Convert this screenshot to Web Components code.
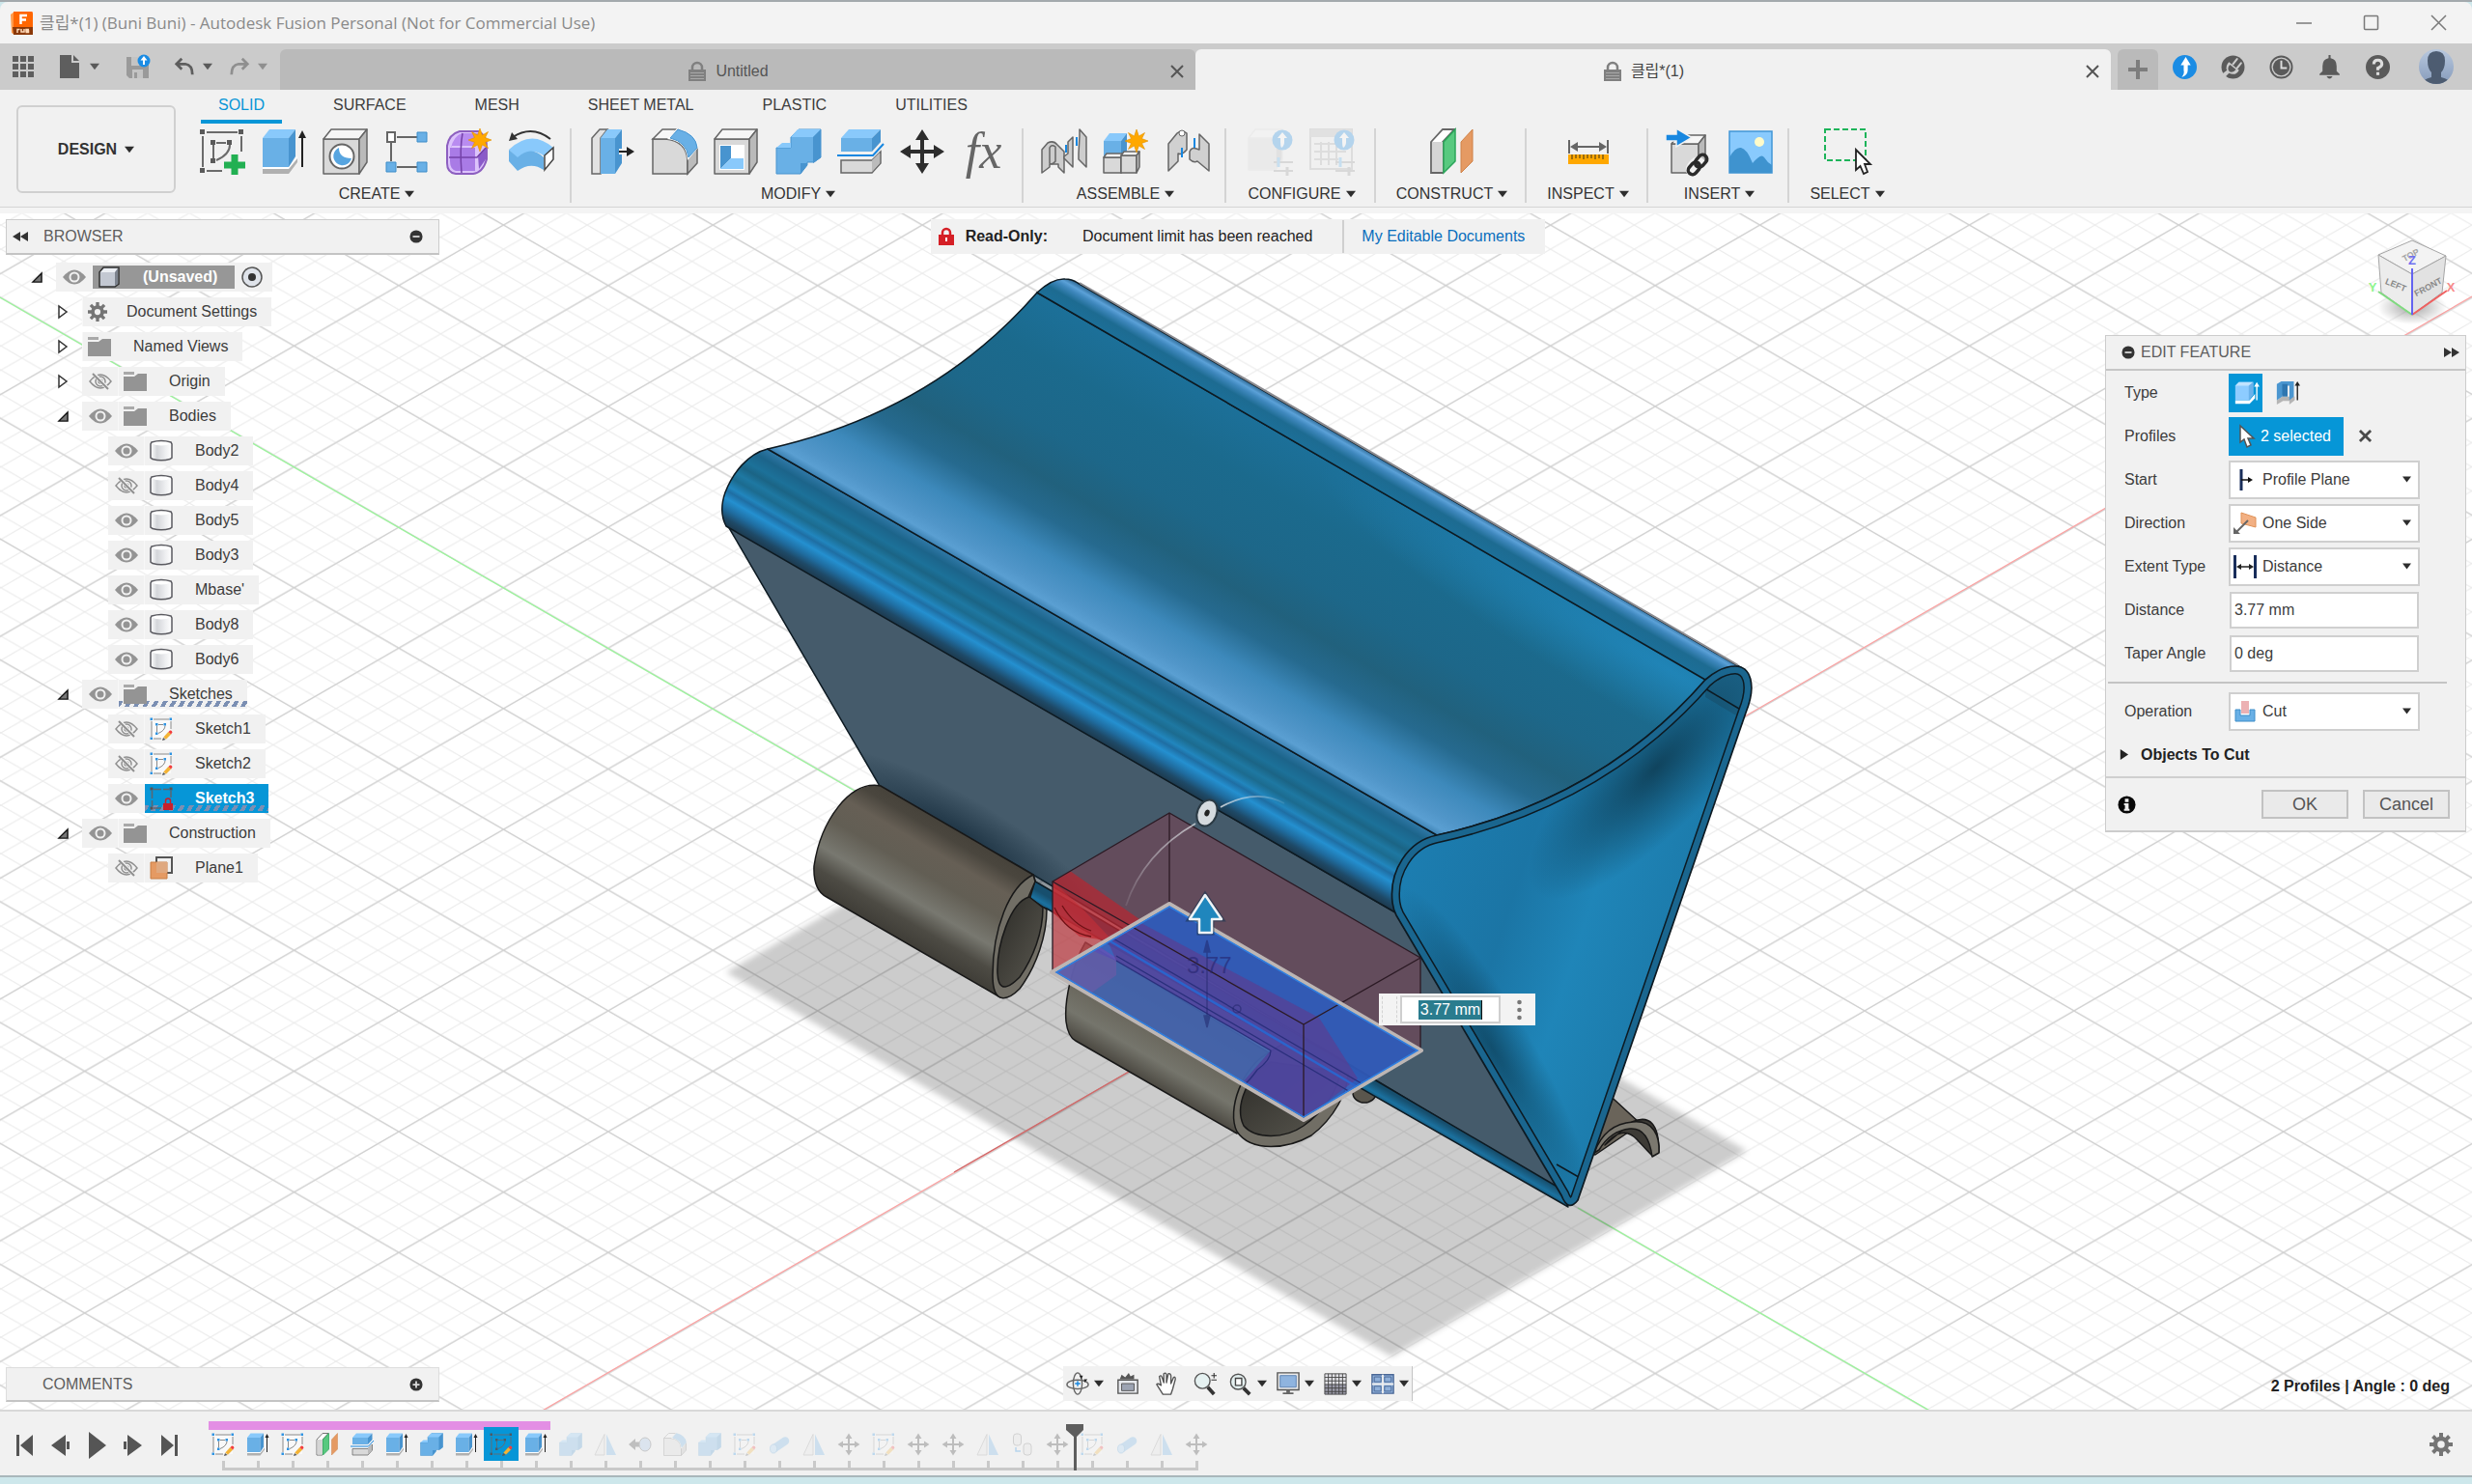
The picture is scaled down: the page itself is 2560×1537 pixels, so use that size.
<!DOCTYPE html>
<html lang="en">
<head>
<meta charset="utf-8">
<title>클립*(1) - Autodesk Fusion Personal</title>
<style>
  html, body { height: 100%; }
  body {
    margin: 0; display: flex; flex-direction: column; overflow: hidden;
    font: 16px/20px "Liberation Sans", "Noto Sans CJK KR", sans-serif;
    color: #3c3c3c; background: #cde7eb;
    border-top: 2px solid #a3a9ad; box-sizing: border-box;
  }
  model-viewport { flex: 1; min-height: 0; }
</style>
</head>
<body>
<title-bar></title-bar>
<document-bar></document-bar>
<tool-ribbon></tool-ribbon>
<model-viewport>
  <notice-bar slot="top"></notice-bar>
  <browser-panel slot="top-left"></browser-panel>
  <view-cube slot="top-right"></view-cube>
  <edit-panel slot="right"></edit-panel>
  <comments-panel slot="bottom-left"></comments-panel>
  <navigation-bar slot="bottom"></navigation-bar>
  <span slot="status">2 Profiles | Angle : 0 deg</span>
</model-viewport>
<time-line></time-line>

<script>
/* Icon artwork: name -> [viewBox size, markup] */
const B = { t: '#89c9fb', f: '#69b0e6', s: '#4894cf' };
const box = (x, y, w, h, d, c, stroke) => {
  const e = Math.round(d * 0.8);
  const st = stroke ? ` stroke="${stroke}" stroke-width="1.5" stroke-linejoin="round"` : '';
  return `<path fill="${c.f}"${st} d="M${x} ${y + d}h${w}v${h}h${-w}z"/><path fill="${c.t}"${st} d="M${x} ${y + d}l${e} ${-d}h${w}l${-e} ${d}z"/><path fill="${c.s}"${st} d="M${x + w} ${y + d}l${e} ${-d}v${h - 2}l${-e} ${d + 2}z"/>`;
};
const G = { t: '#f6f6f6', f: '#d9d9d9', s: '#bababa' };
const GS = '#666';
const star = (x, y) => `<path fill="#ffa800" stroke="#e09000" stroke-width=".6" transform="translate(${x} ${y})" d="M0-12 2.4-5 8.5-8.500 5.500-2.400 12 0 5.500 2.400 8.500 8.500 2.400 5 0 12-2.400 5-8.500 8.500-5.500 2.400-12 0-5.500-2.400-8.500-8.500-2.400-5z"/>`;
const sq = (x, y, s, c) => `<path fill="${c}" d="M${x} ${y}h${s}v${s}h${-s}z"/>`;
const upBadge = (x, y) => `<circle cx="${x}" cy="${y}" r="10.500" fill="#1b8ce4"/><path fill="#fff" d="M${x} ${y - 8}l5 6h-3v4q0 4-3 6-1-2-1-6v-4h-3z"/>`;
const sliders = (x, y) => `<g stroke="#999" stroke-width="2" fill="none"><path d="M${x} ${y}h20M${x} ${y + 9}h20"/><path stroke="#5fb4ee" stroke-width="3" d="M${x + 5} ${y - 5}v10"/><path stroke-width="3" d="M${x + 14} ${y + 5}v9"/></g>`;
const pencil = `<path fill="#f5b333" stroke="#d79a22" stroke-width=".5" d="M29 41 39 30 44 35 34 45z"/><path fill="#555" d="M28 42 33 46 26 48z"/><path fill="#f23c3c" d="M39 30 42 27Q46 26 47 31L44 35z"/>`;
const sketchBase = (c, l) => `<g stroke="${l}" stroke-width="2" fill="none"><path d="M8 4H40M4 8V40M44 8V24M8 44H24M15 17V31M18 15H28M32 17Q32 27 18 33"/></g>` + [[1,1],[41,1],[1,41],[12,12],[29,12],[12,31]].map(p => sq(p[0], p[1], 5, c)).join('');
const ICONS = {
  sketch: [48, sketchBase('#5a5a5a', '#6b6b6b') + '<path stroke="#f1f1f1" stroke-width="12" d="M38 25v24M25 38h24"/><path stroke="#22b052" stroke-width="7" d="M37 27v21M26 38h22"/>'],
  sketchEdit: [48, '<path fill="#fff" opacity=".6" d="M4 4h40v40H4z"/>' + sketchBase('#2d93e2', '#8a8a8a') + pencil],
  sketchActive: [48, sketchBase('#4c5a64', '#5d6f7a') + pencil],
  sketchLocked: [48, `<g stroke="#5d6670" stroke-width="3" fill="none"><path d="M8 5H40M5 8V40M44 8V22" stroke-dasharray="16 4"/><path d="M8 44h16"/></g>${sq(1,1,6,'#5c5050')}${sq(41,1,6,'#5c5050')}${sq(1,41,6,'#5c5050')}<path fill="none" stroke="#c7202c" stroke-width="3" d="M33 34v-5a5 5 0 0 1 10 0v5"/><path fill="#c7202c" d="M28 34h20v14H28z"/>`],
  extrude: [48, '<path fill="#b0b0b0" d="M2 41h27l9-12v6L29 47H2z"/><path fill="#fff" d="M2 40h27l9-12v3l-9 11H2z"/>' + box(2, 1, 27, 30, 9, B) + '<path stroke="#222" stroke-width="2" d="M43 8v32"/><path fill="#222" d="M39 10 43 2l4 8z"/>'],
  hole: [48, box(1, 1, 37, 36, 10, G, GS) + '<circle cx="20" cy="29" r="12.500" fill="#fff" stroke="#666" stroke-width="2"/><path fill="#57a5e0" d="M17 20a9.500 9.500 0 1 0 13 11Q17 31 17 20z"/>'],
  pattern: [48, '<g stroke="#666" stroke-width="2" fill="none"><path d="M13 9H34M7 15V34M13 40H34"/><path fill="#fff" d="M3 4h8v10H3z"/></g>' + [[34,4],[2,35],[34,35]].map(p => `<path fill="#69b0e6" stroke="#3f8dc8" d="M${p[0]} ${p[1]}h10v10h-10z"/>`).join('')],
  form: [48, '<path fill="#dcc3fb" stroke="#8d5fc0" stroke-width="2" d="M1 18Q3 6 14 3H34Q43 8 42 22V32Q38 46 28 47H10Q1 46 1 36z"/><path fill="#b98cf0" d="M5 20Q8 8 16 5H34L28 18H5z"/><path fill="#a97be6" d="M4 20H30V44H10Q4 42 4 34z"/><path fill="#8a5bc9" d="M33 28 41 20V32L34 42z"/><path fill="none" stroke="#7442a8" stroke-width="1.5" d="M3 30H32L41 20M17 5Q14 20 16 46"/>' + star(35, 12)],
  bend: [48, '<path fill="#89c9fb" d="M1 22Q24 0 47 20L38 29Q24 18 10 31z"/><path fill="#69b0e6" d="M1 22 10 30Q24 17 37 30V43Q24 34 10 44L1 34z"/><path fill="#fff" stroke="#444" stroke-width="1.500" d="M38 28 47 20V32L38 43z"/><path fill="none" stroke="#333" stroke-width="2" d="M5 9Q25-4 44 11"/><path fill="#333" d="M1 13 4 4 10 11z"/>'],
  press: [48, '<path fill="#e2e2e2" stroke="#666" stroke-width="1.500" d="M2 47V10L10 1H18L11 10V47z"/>' + box(11, 1, 15, 37, 9, B) + '<path stroke="#f1f1f1" stroke-width="6" d="M30 24h9"/><path stroke="#222" stroke-width="2" d="M30 24h10"/><path fill="#222" d="M38 19l8 5-8 5z"/>'],
  fillet: [48, '<path fill="#d9d9d9" stroke="#666" stroke-width="1.500" d="M1 47V11H14Q36 13 37 33V47z"/><path fill="#f6f6f6" stroke="#666" stroke-width="1.500" d="M1 11 11 1H26L18 11z"/><path fill="#bbb" stroke="#666" stroke-width="1.500" d="M37 47V31L47 20V36z"/><path fill="#fff" d="M16 11 26 0Q48 6 48 20L37 33Q36 13 16 11z"/><path fill="#69b0e6" stroke="#4894cf" d="M19 10 27 1Q46 6 47 20L38 30Q36 14 19 10z"/>'],
  shell: [48, box(1, 1, 36, 36, 10, G, GS) + '<path fill="#fff" d="M6 17h26v26H6z"/><path fill="#4894cf" d="M7 18h11v13L7 42z"/><path fill="#89c9fb" d="M7 42 18 31H31V42z"/>'],
  combine: [48, '<path fill="#69b0e6" stroke="#4894cf" d="M1 47V20H16V9L24 1H47V30L40 35H33V38L26 47z"/><path fill="#89c9fb" d="M1 20 7 15H16V20zM16 9 23 1H47L39 9z"/><path fill="#4894cf" d="M39 9 47 1V30L39 36zM26 36H33V38L26 47z"/>'],
  split: [48, '<path fill="#69b0e6" d="M4 10H36V24H4z"/><path fill="#89c9fb" d="M4 10 12 1H45L36 10z"/><path fill="#4894cf" d="M36 10 45 1V14L36 24z"/><path fill="none" stroke="#1787e0" stroke-width="2" d="M0 28H37L48 16"/><path fill="#d9d9d9" stroke="#666" stroke-width="1.500" d="M4 33H36L45 24V36L36 46H4z"/><path fill="#bbb" d="M36 33 44 25V36L36 45z"/>'],
  move: [48, '<path stroke="#2d2d2d" stroke-width="4" d="M24 6V42M6 24H42"/><path fill="#2d2d2d" d="M17 12 24 1l7 11zM17 36 24 47l7-11zM12 17 1 24l11 7zM36 17 47 24l-11 7z"/>'],
  joint: [48, '<g fill="#cdcdcd" stroke="#666" stroke-width="1.500" stroke-linejoin="round"><path d="M1 46V22L7 15Q13 12 17 17L24 24V46L18 40V37H9V40z"/><path d="M9 36V20Q11 16 15 19V34Q12 38 9 36z"/><path d="M28 14 33 9V40L24 31V29L28 26z"/><path d="M40 8V1L47 9V40L39 32V26z"/></g><path stroke="#1787e0" stroke-width="2" d="M26 17v8M37 9v9"/>'],
  component: [48, box(1, 5, 18, 20, 8, B) + box(1, 26, 18, 16, 4, G, GS) + box(19, 24, 16, 18, 4, G, GS) + star(35, 13)],
  asBuilt: [48, '<g fill="#d0d0d0" stroke="#666" stroke-width="1.500" stroke-linejoin="round"><path d="M4 44V16L13 5Q18 1 23 5V22Q18 28 14 26V34z"/><path d="M46 44V16L36 6V22Q28 18 26 24V32Q30 36 34 34z"/></g><path stroke="#1787e0" stroke-width="2" d="M18 20v10M31 10v10"/><circle cx="18" cy="5" r="3" fill="#fff" stroke="#666"/>'],
  config: [48, `<g opacity=".28">${box(1, 1, 28, 33, 9, G, '#ddd')}${upBadge(36, 12)}${sliders(27, 35)}</g>`],
  configTable: [48, `<g opacity=".28"><path fill="#eee" stroke="#aaa" stroke-width="2" d="M1 1H44V42H1z"/><path fill="#bbb" d="M1 1H44V9H1z"/><path stroke="#aaa" stroke-width="2" fill="none" d="M5 16H38M5 24H38M5 32H30M12 14V38M20 14V38M28 14V38"/>${upBadge(36, 12)}${sliders(27, 35)}</g>`],
  construct: [48, '<path fill="#fff" stroke="#666" stroke-width="1.800" d="M2 46V14L14 1H26L14 14V46z"/><path fill="#d5d5d5" d="M3 14H14V45H3z"/><path fill="#58c97f" stroke="#2ba55a" stroke-width="1.500" d="M15 46V14L27 1V34z"/><path fill="#e59a63" stroke="#cf8248" d="M33 46V14L45 1V34z"/>'],
  measure: [48, '<path stroke="#666" stroke-width="2" fill="none" d="M4 12V26M44 12V26M8 19H40"/><path fill="#666" d="M5 19 13 14V24zM43 19 35 14V24z"/><path fill="#ffa800" d="M3 27H45V37H3z"/><path stroke="#7d5a10" stroke-width="1.500" d="M7 27v5M11 27v4M15 27v4M19 27v5M23 27v4M27 27v4M31 27v5M35 27v4M39 27v5"/>'],
  insertLink: [48, box(6, 7, 28, 30, 9, G, GS) + '<path fill="#1787e0" stroke="#f1f1f1" stroke-width="1.500" d="M0 6H11V0L27 9.500 11 19V13H0z"/><g fill="none" stroke="#f1f1f1" stroke-width="9"><rect x="24" y="36" width="14" height="9" rx="4.500" transform="rotate(-50 31 40)"/></g><g fill="none" stroke="#2b2b2b" stroke-width="3.500"><rect x="22" y="37" width="14" height="9" rx="4.500" transform="rotate(-50 29 41)"/><rect x="30" y="29" width="14" height="9" rx="4.500" transform="rotate(-50 37 34)"/></g>'],
  image: [48, '<path fill="#89cafd" stroke="#4296d6" stroke-width="1.500" d="M2 3H46V46H2z"/><circle cx="33" cy="14" r="5" fill="#fffbc9"/><path fill="#3f93cf" d="M2 46V30Q8 19 14 20T26 36Q35 25 38 30T46 38V46z"/>'],
  select: [48, '<path fill="none" stroke="#1db45a" stroke-width="2" stroke-dasharray="6 3" d="M1 1H43V33H1z"/><path fill="#fff" stroke="#222" stroke-width="1.800" d="M33 22V43L37.500 39 41 47 45 45 42 37H48z"/>'],
  caret: [12, '<path fill="#2d2d2d" d="M0 2H12L6 10z"/>'],
  caretDim: [12, '<path fill="#8f8f8f" d="M0 2H12L6 10z"/>'],
  caretTab: [12, '<path fill="#5a5a5a" d="M0 2H12L6 10z"/>'],
  right: [12, '<path fill="#222" d="M2 0V12L11 6z"/>'],
  rewind: [16, '<path fill="#333" d="M8 3V13L0 8zM16 3V13L8 8z"/>'],
  forward: [16, '<path fill="#333" d="M0 3V13L8 8zM8 3V13L16 8z"/>'],
  minus: [16, '<circle cx="8" cy="8" r="7.500" fill="#333"/><path stroke="#ddd" stroke-width="2" d="M4 8H12"/>'],
  plus: [16, '<circle cx="8" cy="8" r="7.500" fill="#333"/><path stroke="#ddd" stroke-width="2" d="M4 8H12M8 4V12"/>'],
  info: [20, '<circle cx="10" cy="10" r="9.500" fill="#080808"/><path fill="#eee" d="M8 3.500h4v3.500H8zM7 8.500h5v6h1v2H7v-2h1v-4H7z"/>'],
  xmark: [14, '<path stroke="#4a4a4a" stroke-width="3" d="M1 1 13 13M13 1 1 13"/>'],
  xthin: [14, '<path stroke="#555" stroke-width="2" d="M1 1 13 13M13 1 1 13"/>'],
  lock: [20, '<path fill="none" stroke="#808080" stroke-width="2.500" d="M5 10V6a5 5 0 0 1 10 0v4"/><path fill="#808080" d="M1 8H19V20H1z"/><path stroke="#a8a8a8" stroke-width="1.200" d="M3 11.500H17M3 14.500H17M3 17.500H17"/>'],
  redLock: [20, '<path fill="none" stroke="#d51f26" stroke-width="2.500" d="M6 9V6a4 4 0 0 1 8 0v3"/><path fill="#d51f26" d="M2 8H18V19H2z"/><path fill="#fff" d="M9 11h2v4H9z"/>'],
  apps: [24, [0, 8, 16].map(y => [0, 8, 16].map(x => sq(x + 1, y + 1, 6, '#5e5e5e')).join('')).join('')],
  file: [26, '<path fill="#5e5e5e" d="M3 1H15V9H23V25H3z"/><path fill="#5e5e5e" d="M17 1V7H23z"/>'],
  save: [26, '<path fill="#9a9a9a" d="M1 3H20L24 7V25H4L1 22z"/><path fill="#c4c4c4" d="M6 3H17V12H6zM7 16H18V25H7z"/><path fill="#9a9a9a" d="M9 19h3v6H9z"/><circle cx="19" cy="7" r="6.500" fill="#1b8ce4"/><path fill="#fff" d="M19 2l3.500 4.500h-2.500V11h-2V6.500h-2.500z"/>'],
  undo: [24, '<path fill="none" stroke="#5e5e5e" stroke-width="3" d="M9 3 3 9 9 15M3 9H13Q21 10 21 21"/>'],
  redo: [24, '<path fill="none" stroke="#8f8f8f" stroke-width="3" d="M15 3 21 9 15 15M21 9H11Q3 10 3 21"/>'],
  newTab: [20, '<path stroke="#7d7d7d" stroke-width="4" d="M10 0V20M0 10H20"/>'],
  sync: [24, '<circle cx="12" cy="12" r="12" fill="#1b8ce4"/><path fill="#fff" d="M13 2 18 10H15V15Q15 20 9 22 12 18 11 15V10H8z"/>'],
  plug: [24, '<circle cx="12" cy="12" r="11.500" fill="#5a5a5a"/><path stroke="#cbcbcb" stroke-width="2" stroke-linecap="round" d="M12 9 16 4M16 13 20 8"/><path fill="#cbcbcb" d="M8 7 18 15Q15 21 8 18L3 23 1 19 6 15Q4 11 8 7z"/><path fill="#5a5a5a" d="M9 9.500 15 14.500Q12 18 8.500 16.500 5.500 13 9 9.500z"/>'],
  clock: [26, '<circle cx="13" cy="13" r="11.500" fill="none" stroke="#5a5a5a" stroke-width="2"/><circle cx="13" cy="13" r="9" fill="#5a5a5a"/><path fill="none" stroke="#ddd" stroke-width="2" d="M13 6V14H19"/>'],
  bell: [24, '<path fill="#5a5a5a" d="M11 0H13V3Q19 4 19 11V16L22 19V20H2V19L5 16V11Q5 4 11 3zM9 21H15Q12 26 9 21z"/>'],
  help: [24, '<circle cx="12" cy="12" r="12" fill="#5a5a5a"/><path fill="none" stroke="#ddd" stroke-width="3" d="M8 9Q8 5 12 5T16 9Q16 11 12 13V15"/><path fill="#ddd" d="M10.500 17h3v3h-3z"/>'],
  avatar: [36, '<defs><linearGradient id="g" x2="0" y2="1"><stop stop-color="#b8c8de"/><stop offset="1" stop-color="#869bbb"/></linearGradient><clipPath id="c"><circle cx="18" cy="18" r="18"/></clipPath></defs><g clip-path="url(#c)"><path fill="url(#g)" d="M0 0H36V36H0z"/><path fill="#4d5c71" d="M18 2Q27 2 27 12 27 20 23 24V29Q32 31 33 36H3Q4 31 13 29V24Q9 20 9 12 9 2 18 2z"/></g>'],
  fusion: [24, '<path fill="#ff9a4a" d="M0 3 4 0V24L1 22z"/><path fill="#f60" d="M3 0H22Q23 0 23 2V16H3z"/><path fill="#8a3808" d="M2 16H23V24H3z"/><path stroke="#fff" stroke-width="2.500" fill="none" d="M10.500 13V4H17M10.500 8.500H16"/><path stroke="#ffd9b8" stroke-width="1.500" fill="none" d="M7 22V18.500H9.500M11 18v3h3v-3M19 18.500H16V20h2.500v1.500H15.500"/>'],
  winMin: [18, '<path stroke="#7a7a7a" stroke-width="1.500" d="M1 9H17"/>'],
  winMax: [18, '<rect x="1.500" y="1.500" width="14" height="14" rx="1" fill="none" stroke="#7a7a7a" stroke-width="1.500"/>'],
  winClose: [18, '<path stroke="#7a7a7a" stroke-width="1.500" d="M1 1 16 16M16 1 1 16"/>'],
  eye: [24, '<path fill="#949494" d="M0 12Q12-3 24 12 12 27 0 12z"/><circle cx="12" cy="12" r="4.500" fill="none" stroke="#f1f1f1" stroke-width="2"/>'],
  eyeOff: [24, '<g fill="none" stroke="#8f8f8f" stroke-width="1.500"><path d="M1 12Q12-2 23 12 12 26 1 12z"/><circle cx="12" cy="12" r="5"/><circle cx="12" cy="12" r="2"/><path stroke="#f1f1f1" stroke-width="4" d="M5 4 20 20"/><path stroke-width="2" d="M4 4 20 20"/></g>'],
  folder: [24, '<path fill="#949494" d="M0 7H11L15 4H24V22H0z"/><path fill="#a9a9a9" d="M0 2H11V5H0z"/>'],
  gear: [24, '<circle cx="12" cy="12" r="6" fill="none" stroke="#757575" stroke-width="4.500"/>' + [0, 45, 90, 135].map(a => `<path stroke="#757575" stroke-width="4" transform="rotate(${a} 12 12)" d="M12 0V5M12 19V24"/>`).join('')],
  cylinder: [24, '<defs><linearGradient id="cy"><stop stop-color="#fff"/><stop offset=".3" stop-color="#d4d6da"/><stop offset=".7" stop-color="#eeeff1"/><stop offset="1" stop-color="#fff"/></linearGradient></defs><path fill="url(#cy)" d="M1 3H23V19Q12 24 1 19z"/><path fill="#fff" d="M1 4Q12 9 23 4 12-2 1 4z"/><path fill="none" stroke="#5a5a60" stroke-width="1.500" d="M2 3Q12 0 22 3L23 5V19L21 20.500Q12 23 3 20.500L1 19V5z"/>'],
  root: [24, '<path fill="#c3c8d2" stroke="#333" stroke-width="1.500" d="M2 7 6 2H22V19L18 22H2z"/><path fill="#eceff4" d="M3 7 7 3H21L18 7z"/><path fill="#7d838e" d="M18 7 21 3V19L18 21z"/>'],
  plane: [24, '<path fill="none" stroke="#555" stroke-width="2" d="M7 1H23V17H7z"/><path fill="#e59a63" stroke="#c97f45" d="M1 6H18V23H1z"/><path fill="#dfa87f" d="M7 6H18V17H7z"/>'],
  target: [24, '<circle cx="12" cy="12" r="10" fill="#dfe3ea" stroke="#555" stroke-width="1.500"/><circle cx="12" cy="12" r="4" fill="#333"/>'],
  open: [12, '<path fill="#777" stroke="#111" stroke-width="1.500" d="M1 11H11V1z"/>'],
  closed: [14, '<path fill="#fff" stroke="#333" stroke-width="1.500" d="M3 1V13L11 7z"/>'],
  typeSolid: [28, '<path fill="#fff" d="M2 22h16l6-7v5l-6 6H2z"/><path fill="#8dccff" d="M2 6 6 2H22V16L17 22H2z"/><path fill="#c0e3ff" d="M2 6 6 2H22L17 6z"/><path fill="#6bb2ea" d="M17 6 22 2V16L17 22z"/><path stroke="#fff" stroke-width="1.500" d="M26 6V22"/><path fill="#fff" d="M23 7 26 2l3 5z"/>'],
  typeThin: [28, '<path fill="#b5b5b5" d="M2 22 8 18h14v4l-6 5v-4H9l-7 4z"/><path fill="#4b96d0" d="M2 4 7 1H21V18L16 22V6H11L8 18 2 22z"/><path fill="#2f76b0" d="M8 4H14V18H8z"/><path stroke="#222" stroke-width="1.500" d="M25 4V22"/><path fill="#222" d="M22 6 25 1l3 5z"/>'],
  pointer: [24, '<path fill="#fff" stroke="#555" stroke-width="1.500" d="M5 1V18L9 15 12 23 16 21 13 14H19z"/>'],
  startPlane: [24, '<path stroke="#182d5a" stroke-width="3" d="M8 1V23"/><path stroke="#111" stroke-width="1.500" d="M8 12H16"/><path fill="#111" d="M15 9 20 12 15 15z"/>'],
  oneSide: [24, '<path fill="#f2b083" stroke="#e09258" d="M8 1 23 6V16L8 12z"/><path stroke="#666" stroke-width="2" d="M15 9 3 21"/><path fill="#666" d="M0 23V16L7 23z"/>'],
  distance: [24, '<path stroke="#182d5a" stroke-width="3" d="M1.500 0V24M22.500 0V24"/><path stroke="#222" stroke-width="1.500" d="M5 12H19"/><path fill="#222" d="M3 12 8 9V15zM21 12 16 9V15z"/>'],
  cut: [24, '<path fill="#69b0e6" stroke="#3f8dc8" d="M2 10H7V16H17V10H22V22H2z"/><path fill="#ecb1b3" d="M8 1H16V14H8z"/>'],
  first: [28, '<path fill="#555" d="M2 3H5V25H2zM6 14 19 3V25z"/>'],
  back: [28, '<path fill="#555" d="M2 14 17 3V25zM18 10H21V18H18z"/>'],
  play: [28, '<path fill="#555" d="M5 0V28L23 14z"/>'],
  next: [28, '<path fill="#555" d="M24 14 9 3V25zM5 10H8V18H5z"/>'],
  last: [28, '<path fill="#555" d="M22 3H25V25H22zM21 14 8 3V25z"/>'],
  mirror: [48, '<path fill="#e8e8e8" stroke="#999" stroke-width="2" d="M22 3V46H2z"/><path fill="#69b0e6" d="M26 3V46H46z"/>'],
  offset: [48, '<path fill="#333" d="M0 24 14 12V19H22V29H14V36z"/><ellipse cx="34" cy="24" rx="12" ry="14" fill="#9fc3e6" stroke="#555" stroke-width="2"/>'],
  pipe: [48, '<path stroke="#69b0e6" stroke-width="17" stroke-linecap="round" d="M14 32 36 17"/><ellipse cx="12" cy="33" rx="7" ry="9" fill="#a7d6fb" stroke="#4894cf" stroke-width="1.500"/>'],
  bodies: [48, '<g fill="#e3e3e3" stroke="#777" stroke-width="2"><rect x="5" y="2" width="16" height="24" rx="6"/><rect x="26" y="22" width="16" height="24" rx="6"/></g><path fill="none" stroke="#1787e0" stroke-width="3" d="M10 30V38H20"/>'],
  orbit: [26, '<g fill="none" stroke="#666" stroke-width="1.500"><ellipse cx="13" cy="13" rx="5" ry="12"/><ellipse cx="13" cy="14" rx="12" ry="5"/></g><path stroke="#1787e0" stroke-width="1.500" d="M13 10v6M10 13h6"/><path fill="#222" d="M15 4l4 0-2 4zM20 8h4l-3 4z"/>'],
  look: [26, '<path fill="#e6e8ec" stroke="#555" stroke-width="1.500" d="M2 9H24V24H2z"/><path fill="#9da4b3" stroke="#555" d="M6 13H20V21H6z"/><path fill="#555" d="M4 8 6 3 10 6 14 1 16 5 20 3V8z"/>'],
  hand: [26, '<path fill="#fff" stroke="#555" stroke-width="1.500" stroke-linejoin="round" d="M9 25 2 14Q3 12 7 15L5 5Q7 3 8 6L10 12V2Q12 0 13 3V12L15 2Q17 1 18 4V13L21 6Q23 5 23 8L20 19 18 25z"/>'],
  zoom: [26, '<circle cx="10" cy="10" r="8.500" fill="#e5f1f1" stroke="#555" stroke-width="1.500"/><path stroke="#333" stroke-width="4" d="M16 17 23 25"/><path stroke="#333" stroke-width="1.200" d="M20 4h6M23 1v6M20 9h6"/>'],
  zoomWin: [26, '<circle cx="10" cy="11" r="8.500" fill="#e5f1f1" stroke="#555" stroke-width="1.500"/><path fill="#fff" stroke="#444" stroke-width="1.500" d="M7 7H14V15H7z"/><path stroke="#333" stroke-width="4" d="M16 18 23 25"/>'],
  monitor: [26, '<path fill="#ececec" stroke="#555" stroke-width="1.500" d="M1 1H25V20H1z"/><path fill="#8fb4df" stroke="#5a7fb0" d="M4 4H22V17H4z"/><path fill="#666" d="M11 20H15V23H19V25H7V23H11z"/>'],
  grid: [26, '<path fill="#e3e3e8" d="M1 2H25V25H1z"/><path fill="#9a9aa8" d="M1 14H25V25H1z"/><path stroke="#444" fill="none" d="M1 2H25V25H1zM5 2V25M9 2V25M13 2V25M17 2V25M21 2V25M1 6H25M1 10H25M1 14H25M1 18H25M1 22H25"/>'],
  views: [26, '<path fill="#8fb0da" stroke="#4a6795" stroke-width="1.500" d="M1 3H25V24H1z"/><path stroke="#eee" stroke-width="2" d="M13 3V24M1 13.500H25"/><path fill="none" stroke="#4a6795" d="M3.500 5.500H11V11H3.500zM15 5.500H22.500V11H15zM3.500 16H11V21.500H3.500zM15 16H22.500V21.500H15z"/>']
};

/* Registers an element whose shadow root is built from a template string or a function of the host. */
function define(name, css, render) {
  customElements.define(name, class extends HTMLElement {
    connectedCallback() {
      if (this.shadowRoot) return;
      const root = this.attachShadow({ mode: 'open' });
      const t = document.createElement('template');
      t.innerHTML = `<style>:host,*{box-sizing:border-box}button,input,select{font:inherit;color:inherit;border:0;background:none;padding:0;margin:0;border-radius:0}${css}</style>` + (typeof render === 'function' ? render(this) : render);
      root.append(t.content.cloneNode(true));
    }
  });
}
const ic = (n, s) => `<app-icon name="${n}" size="${s}"></app-icon>`;

define('app-icon', ':host{display:inline-flex;flex:none}svg{display:block;overflow:visible}', el => {
  const [vb, body] = ICONS[el.getAttribute('name')];
  const s = el.getAttribute('size') || vb;
  return `<svg width="${s}" height="${s}" viewBox="0 0 ${vb} ${vb}" aria-hidden="true">${body}</svg>`;
});

define('title-bar', `:host{display:flex;align-items:center;height:43px;padding:0 25px 0 11px;gap:6px;background:#f3f3f3;border-radius:8px 8px 0 0;color:#8a8a8a}
  h1{flex:1;margin:0;font:17px/24px "Open Sans","Noto Sans CJK KR",sans-serif}
  nav{display:flex;gap:52px}button{display:flex}`,
  `${ic('fusion', 24)}<h1>클립*(1) (Buni Buni) - Autodesk Fusion Personal (Not for Commercial Use)</h1>
  <nav><button aria-label="Minimize">${ic('winMin', 18)}</button><button aria-label="Maximize">${ic('winMax', 18)}</button><button aria-label="Close">${ic('winClose', 18)}</button></nav>`);

define('document-tab', `:host{flex:1;display:flex;align-items:center;height:42px;padding:3px 12px 0 14px;background:#bababa;border-radius:6px 6px 0 0;color:#555}
  :host([active]){background:#f1f1f1;color:#444}
  span{flex:1;display:flex;justify-content:center;align-items:center;gap:9px;padding-right:8px}button{display:flex}`,
  `<span>${ic('lock', 20)}<slot></slot></span><button aria-label="Close tab">${ic('xthin', 14)}</button>`);

define('document-bar', `:host{display:flex;align-items:flex-end;height:48px;background:#cbcbcb}
  .tools{width:290px;height:48px;display:flex;align-items:center;padding-left:12px}
  button{display:flex;align-items:center;gap:8px}
  .tools button:nth-child(2){margin-left:23px}.tools button:nth-child(3){margin-left:27px}
  .tools button:nth-child(4){margin-left:24px}.tools button:nth-child(5){margin-left:17px}
  .new{width:42px;height:42px;margin-left:7px;justify-content:center;background:#bababa;border-radius:6px 6px 0 0}
  .right{display:flex;align-items:center;align-self:center;gap:25px;padding:0 19px 0 15px}
  .right button:last-child{margin-left:5px}`,
  `<div class="tools"><button aria-label="Data panel">${ic('apps', 24)}</button><button aria-label="File">${ic('file', 26)}${ic('caretTab', 10)}</button><button aria-label="Save">${ic('save', 26)}</button><button aria-label="Undo">${ic('undo', 22)}${ic('caretTab', 10)}</button><button aria-label="Redo">${ic('redo', 22)}${ic('caretDim', 10)}</button></div>
  <document-tab>Untitled</document-tab><document-tab active>클립*(1)</document-tab>
  <button class="new" aria-label="New design">${ic('newTab', 20)}</button>
  <div class="right">${['sync', 'plug', 'clock', 'bell', 'help'].map(n => `<button aria-label="${n}">${ic(n, 25)}</button>`).join('')}<button aria-label="Account">${ic('avatar', 36)}</button></div>`);

define('ribbon-group', `:host{display:flex;flex-direction:column;justify-content:space-between;align-items:center;height:77px;border-right:2px solid #d4d4d4;flex:none;padding-left:3px}
  :host([first]){padding:0 8px 0 0}
  :host([last]){border:0;padding:0}
  .row{display:flex}.row button{width:64px;display:flex;justify-content:center}
  .label{display:flex;align-items:center;gap:5px;line-height:18px;color:#333}
  .fx{font:italic 52px/48px "Liberation Serif",serif;color:#666}`,
  el => {
    const list = el.getAttribute('icons').split(' ');
    const cell = n => n === 'fx' ? `<button class="fx" aria-label="Parameters">fx</button>` : `<button aria-label="${n}">${ic(n, 48)}</button>`;
    return `<style>:host{width:${el.getAttribute('width')}px}</style><div class="row">${list.map(cell).join('')}</div><button class="label"><slot></slot>${ic('caret', 10)}</button>`;
  });

define('tool-ribbon', `:host{display:grid;grid-template-columns:198px 1fr;height:128px;border-bottom:6px solid #f4f4f4;background:linear-gradient(#d4d4d4,#d4d4d4) 0 100%/100% 1px no-repeat #f1f1f1}
  .design{width:165px;height:91px;margin:16px 0 0 17px;border:2px solid #d0d0d0;border-radius:6px;font-weight:700;color:#333;display:flex;align-items:center;justify-content:center;gap:8px}
  .tabs{display:flex;gap:35px;padding-left:10px;height:35px}
  .tabs button{padding:0 18px;border-bottom:4px solid transparent}
  .tabs .on{color:#0696d7;border-color:#0696d7}
  .groups{display:flex;margin-top:5px}`,
  `<button class="design">DESIGN ${ic('caret', 10)}</button>
  <div><nav class="tabs"><button class="on">SOLID</button><button>SURFACE</button><button>MESH</button><button>SHEET METAL</button><button>PLASTIC</button><button>UTILITIES</button></nav>
  <div class="groups">
    <ribbon-group width="394" icons="sketch extrude hole pattern form bend" first>CREATE</ribbon-group>
    <ribbon-group width="468" icons="press fillet shell combine split move fx">MODIFY</ribbon-group>
    <ribbon-group width="210" icons="joint component asBuilt">ASSEMBLE</ribbon-group>
    <ribbon-group width="155" icons="config configTable">CONFIGURE</ribbon-group>
    <ribbon-group width="156" icons="construct">CONSTRUCT</ribbon-group>
    <ribbon-group width="126" icons="measure">INSPECT</ribbon-group>
    <ribbon-group width="146" icons="insertLink image">INSERT</ribbon-group>
    <ribbon-group width="120" icons="select" last>SELECT</ribbon-group>
  </div></div>`);

define('notice-bar', `:host{display:flex;align-items:center;height:36px;background:#f1f1f1;padding:0 21px 0 6px;color:#222}
  b{margin:0 36px 0 10px}a{color:#0a6ebd;text-decoration:none;margin-left:18px}
  i{width:2px;height:34px;background:#cfcfcf;margin-left:31px}`,
  `${ic('redLock', 20)}<b>Read-Only:</b><span>Document limit has been reached</span><i></i><a href="#documents">My Editable Documents</a>`);

define('tree-row', `:host{display:flex;align-items:center;height:30px;margin-bottom:6px}
  .arrow{display:flex;justify-content:center;width:12px;margin-right:14px}
  .body{display:flex;align-items:center;height:30px;background:#f1f1f1}
  .eye{display:flex;width:37px;justify-content:center;height:30px;align-items:center}
  .item{display:flex;align-items:center;height:30px;padding:0 15px 0 5px;gap:23px;border-left:1px solid #f8f8f8}
  :host([icon=gear]) .item{gap:20px}
  :host([marked]) .item{background:repeating-linear-gradient(120deg,#7b8fb3 0 4px,transparent 4px 8px) 0 22px/100% 6px no-repeat}
  :host([selected]) .item{background-color:#0696d7;color:#fff;font-weight:700}
  :host([root]) .item{height:24px;background:#979797;color:#fff;font-weight:700;padding-right:18px}
  .radio{display:flex;padding:0 9px 0 6px}`,
  el => {
    const a = n => el.getAttribute(n);
    return `<style>:host{padding-left:${a('indent')}px}</style><span class="arrow">${a('arrow') ? ic(a('arrow'), a('arrow') === 'open' ? 11 : 14) : ''}</span>
    <span class="body">${a('eye') ? `<span class="eye">${ic(a('eye'), 24)}</span>` : ''}<span class="item">${ic(a('icon'), a('icon') === 'gear' ? 20 : 24)}<span><slot></slot></span></span>${el.hasAttribute('root') ? `<span class="radio">${ic('target', 24)}</span>` : ''}</span>`;
  });

define('browser-panel', `:host{display:block;width:449px}
  header{display:flex;align-items:center;height:37px;padding:0 16px 0 6px;background:#f1f1f1;border:1px solid #ccc;border-bottom:2px solid #c4c4c4;color:#5d5d5d;margin-bottom:8px}
  header span{flex:1;margin-left:16px}`,
  () => {
    const rows = [
      [26, 'open', 'eye', 'root', '(Unsaved)', 'root'],
      [53, 'closed', '', 'gear', 'Document Settings'],
      [53, 'closed', '', 'folder', 'Named Views'],
      [53, 'closed', 'eyeOff', 'folder', 'Origin'],
      [53, 'open', 'eye', 'folder', 'Bodies'],
      [80, '', 'eye', 'cylinder', 'Body2'], [80, '', 'eyeOff', 'cylinder', 'Body4'], [80, '', 'eye', 'cylinder', 'Body5'],
      [80, '', 'eye', 'cylinder', 'Body3'], [80, '', 'eye', 'cylinder', "Mbase'"], [80, '', 'eye', 'cylinder', 'Body8'], [80, '', 'eye', 'cylinder', 'Body6'],
      [53, 'open', 'eye', 'folder', 'Sketches', 'marked'],
      [80, '', 'eyeOff', 'sketchEdit', 'Sketch1'], [80, '', 'eyeOff', 'sketchEdit', 'Sketch2'],
      [80, '', 'eye', 'sketchLocked', 'Sketch3', 'selected marked'],
      [53, 'open', 'eye', 'folder', 'Construction'],
      [80, '', 'eyeOff', 'plane', 'Plane1']
    ];
    return `<header>${ic('rewind', 16)}<span>BROWSER</span>${ic('minus', 14)}</header>` +
      rows.map(r => `<tree-row indent="${r[0]}" arrow="${r[1]}" eye="${r[2]}" icon="${r[3]}" ${r[5] || ''}>${r[4]}</tree-row>`).join('');
  });

define('comments-panel', `:host{display:flex;align-items:center;width:449px;height:36px;padding:0 16px 0 37px;background:#f1f1f1;border:1px solid #ddd;border-bottom:2px solid #c4c4c4;color:#5d5d5d}span{flex:1}`,
  `<span>COMMENTS</span>${ic('plus', 14)}`);

define('view-cube', ':host{display:block}svg{display:block;font:700 11px "Liberation Sans",sans-serif}', `
  <svg width="110" height="100" viewBox="2450 240 110 100" role="img" aria-label="View cube">
    <defs><radialGradient id="s"><stop stop-opacity=".35"/><stop offset="1" stop-opacity="0"/></radialGradient></defs>
    <ellipse cx="2498" cy="318" rx="36" ry="18" fill="url(#s)"/>
    <g stroke="#a5a5a5" stroke-width="1" stroke-linejoin="round">
      <path fill="#f3f3f3" d="M2498 249 2533 265 2498 284 2463 264z"/>
      <path fill="#ececec" d="M2463 264 2498 284V326L2466 303z"/>
      <path fill="#e2e2e2" d="M2533 265 2498 284V326L2529 303z"/></g>
    <g fill="#8a8a8a" text-anchor="middle" font-size="9"><text transform="translate(2480 298) rotate(22)">LEFT</text><text transform="translate(2516 300) rotate(-28)">FRONT</text><text transform="translate(2498 267) rotate(-28)" fill="#a5a5a5">TOP</text></g>
    <path stroke="#7fdc7f" stroke-width="2" d="M2463 302 2498 326"/><path stroke="#f06060" stroke-width="2" d="M2534 301 2498 326"/><path stroke="#6464f0" stroke-width="2" d="M2498 278V326"/>
    <g text-anchor="middle" font-size="13"><text x="2498" y="274" fill="#7070f0">Z</text><text x="2457" y="302" fill="#8df58d">Y</text><text x="2538" y="302" fill="#f78a8a">X</text></g>
  </svg>`);

define('edit-field', `:host{display:grid;grid-template-columns:108px 198px;align-items:center;height:45px}
  .box{display:grid;align-items:center;height:40px;border:2px solid #cfcfcf;background:#fff}
  .box.text{height:38px;margin:0 1px}
  .box>*{grid-area:1/1}
  select{appearance:none;height:36px;padding-left:33px;width:100%;outline:0}
  input{height:34px;padding-left:3px;width:100%}
  app-icon{pointer-events:none;margin-left:3px}.c{justify-self:end;margin-right:7px}`,
  el => {
    const a = n => el.getAttribute(n), id = 'f';
    return `<label for="${id}">${a('label')}</label>` + (a('icon')
      ? `<div class="box"><select id="${id}"><option>${a('value')}</option></select>${ic(a('icon'), 24)}<app-icon class="c" name="caret" size="9"></app-icon></div>`
      : `<div class="box text"><input id="${id}" value="${a('value')}"></div>`);
  });

define('edit-panel', `:host{display:block;width:374px;background:#f1f1f1;border:1px solid #ccc;border-bottom-width:2px}
  header{display:flex;align-items:center;height:36px;padding:0 6px 0 16px;gap:6px;border-bottom:2px solid #c6c6c6;color:#5d5d5d}header span{flex:1}
  .body{padding-left:19px}.row{display:flex;align-items:center;height:45px}.row span{width:108px}
  button{display:flex;align-items:center}
  .on{background:#0696d7;color:#fff;height:40px}
  .solid{width:35px;justify-content:center;margin-right:13px}.sel{width:119px;padding-left:7px;gap:2px;margin-right:16px}
  hr{border:0;border-top:2px solid #c4c4c4;margin:7px 19px 6px -17px}
  .cut{font-weight:700;color:#222;height:45px;gap:12px;margin-left:-6px}
  footer{display:flex;align-items:center;height:56px;border-top:2px solid #cfcfcf;padding:0 16px 0 12px}
  footer button{width:90px;height:30px;border:2px solid #c2c2c2;background:#eaeaea;color:#555;justify-content:center;font-size:18px}
  footer button:nth-of-type(1){margin:0 15px 0 auto}`,
  `<header>${ic('minus', 14)}<span>EDIT FEATURE</span>${ic('forward', 16)}</header>
  <div class="body">
    <div class="row"><span>Type</span><button class="on solid" aria-label="Solid">${ic('typeSolid', 26)}</button><button aria-label="Thin">${ic('typeThin', 26)}</button></div>
    <div class="row"><span>Profiles</span><button class="on sel">${ic('pointer', 24)}2 selected</button><button aria-label="Clear selection">${ic('xmark', 13)}</button></div>
    <edit-field label="Start" value="Profile Plane" icon="startPlane"></edit-field>
    <edit-field label="Direction" value="One Side" icon="oneSide"></edit-field>
    <edit-field label="Extent Type" value="Distance" icon="distance"></edit-field>
    <edit-field label="Distance" value="3.77 mm"></edit-field>
    <edit-field label="Taper Angle" value="0 deg"></edit-field>
    <hr>
    <edit-field label="Operation" value="Cut" icon="cut"></edit-field>
    <button class="cut">${ic('right', 11)}Objects To Cut</button>
  </div>
  <footer>${ic('info', 19)}<button>OK</button><button>Cancel</button></footer>`);

define('navigation-bar', `:host{display:flex;align-items:center;gap:10px;height:36px;padding:0 3px;background:#f1f1f1;border-right:1px solid #c4c4c4}
  button{display:flex;align-items:center;gap:5px}.p{padding:0 3px}`,
  () => [['orbit', 1], ['look'], ['hand'], ['zoom'], ['zoomWin', 1], ['monitor', 1], ['grid', 1], ['views', 1]]
    .map(([n, c]) => `<button aria-label="${n}" class="${c ? '' : 'p'}">${ic(n, 24)}${c ? ic('caret', 10) : ''}</button>`).join(''));

define('distance-input', `:host{display:flex;align-items:center;width:162px;height:33px;background:#f3f3f3}
  i{width:16px;height:27px;margin:0 3px;border:1px dashed #d3d3d3;border-width:0 1px}
  label{display:flex;width:104px;height:29px;border:2px solid #cfcfcf;background:#fff;justify-content:center;align-items:center}
  input{width:66px;height:20px;background:#2a7c8e;color:#fff;border-right:1px solid #111;text-align:center;outline:0}
  svg{margin-left:17px}`,
  `<i></i><label><input aria-label="Distance" value="3.77 mm"></label><svg width="5" height="24"><g fill="#777"><circle cx="2.500" cy="4" r="2.300"/><circle cx="2.500" cy="12" r="2.300"/><circle cx="2.500" cy="20" r="2.300"/></g></svg>`);

/* Section outline of the clip's open end, shared by the clip path and the wall strokes. */
const END = 'M1488 865C1458 871 1438 902 1442 935Q1443 942 1446 948L1617 1238Q1624 1256 1634 1243L1808 738C1820 708 1812 690 1797 690C1784 690 1774 697 1766 704C1700 780 1610 838 1488 865Z';

define('model-scene', ':host{display:block;width:100%;height:100%}svg{display:block;width:100%;height:100%}text{font:24px "Liberation Sans",sans-serif}', `
<svg viewBox="0 221 2560 1239" preserveAspectRatio="xMidYMid slice" role="img" aria-label="Clip model">
<defs>
  <pattern id="minor" patternUnits="userSpaceOnUse" x="413" y="295.700" width="43.370" height="25.040"><path d="M0 0 43.370 25.040M0 25.040 43.370 0" stroke="#ececec" stroke-width="1.100"/></pattern>
  <pattern id="major" patternUnits="userSpaceOnUse" x="413" y="295.700" width="216.860" height="125.200"><path d="M0 0 216.860 125.200M0 125.200 216.860 0" stroke="#d0d0d0" stroke-width="1.200"/></pattern>
  <filter id="soft" x="-5%" y="-5%" width="110%" height="110%"><feGaussianBlur stdDeviation="3"/></filter>
  <linearGradient id="saddle" gradientUnits="userSpaceOnUse" x1="1073" y1="303" x2="933" y2="545">
    <stop stop-color="#1c7099"/><stop offset=".2" stop-color="#1b6a8d"/><stop offset=".42" stop-color="#1d6789"/><stop offset=".58" stop-color="#21617d"/><stop offset=".7" stop-color="#266a8f"/><stop offset=".82" stop-color="#3d89bb"/><stop offset=".93" stop-color="#5196c9"/><stop offset=".97" stop-color="#5a9fd2"/><stop offset="1" stop-color="#3a7fb0"/></linearGradient>
  <radialGradient id="glow" gradientUnits="userSpaceOnUse" cx="0" cy="0" r="1" gradientTransform="translate(1730 695) rotate(30) scale(420 60)"><stop stop-color="#2290c8" stop-opacity=".65"/><stop offset="1" stop-color="#2290c8" stop-opacity="0"/></radialGradient>
  <linearGradient id="ridge" gradientUnits="userSpaceOnUse" x1="1073" y1="303" x2="1088" y2="277"><stop stop-color="#1c6f98"/><stop offset=".4" stop-color="#1d6b91"/><stop offset=".68" stop-color="#3f88be"/><stop offset=".82" stop-color="#5ba1d8"/><stop offset="1" stop-color="#2a6590"/></linearGradient>
  <linearGradient id="roll" gradientUnits="userSpaceOnUse" x1="795" y1="465" x2="750" y2="543"><stop stop-color="#3079a8"/><stop offset=".12" stop-color="#1c648a"/><stop offset=".25" stop-color="#1c7199"/><stop offset=".33" stop-color="#1b6485"/><stop offset=".42" stop-color="#1e78a2"/><stop offset=".5" stop-color="#1c6b8f"/><stop offset=".6" stop-color="#2186be"/><stop offset=".65" stop-color="#1f6ea3"/><stop offset=".73" stop-color="#2490d0"/><stop offset=".84" stop-color="#1f6c9f"/><stop offset=".93" stop-color="#1e4a68"/><stop offset="1" stop-color="#1d3b50"/></linearGradient>
  <linearGradient id="inside" gradientUnits="userSpaceOnUse" x1="1460" y1="900" x2="1760" y2="1000"><stop stop-color="#1c7db0"/><stop offset=".35" stop-color="#1b75a5"/><stop offset=".6" stop-color="#1f85b8"/><stop offset="1" stop-color="#1b77a6"/></linearGradient>
  <radialGradient id="dark1" gradientUnits="userSpaceOnUse" cx="0" cy="0" r="1" gradientTransform="translate(1715 795) rotate(-46) scale(180 62)"><stop stop-color="#0c3448" stop-opacity=".8"/><stop offset=".5" stop-color="#0c3448" stop-opacity=".4"/><stop offset="1" stop-color="#0c3448" stop-opacity="0"/></radialGradient>
  <radialGradient id="dark2" gradientUnits="userSpaceOnUse" cx="0" cy="0" r="1" gradientTransform="translate(1545 1085) rotate(60) scale(190 40)"><stop stop-color="#0c3c54" stop-opacity=".7"/><stop offset="1" stop-color="#0c3c54" stop-opacity="0"/></radialGradient>
  <radialGradient id="dark3" gradientUnits="userSpaceOnUse" cx="0" cy="0" r="1" gradientTransform="translate(990 868) rotate(30) scale(170 44)"><stop stop-color="#142a3a" stop-opacity=".9"/><stop offset="1" stop-color="#142a3a" stop-opacity="0"/></radialGradient>
  <linearGradient id="foot" gradientUnits="userSpaceOnUse" x1="1350" y1="1080" x2="1342" y2="1094"><stop stop-color="#174f6e"/><stop offset=".5" stop-color="#1b719f"/><stop offset="1" stop-color="#15435c"/></linearGradient>
  <linearGradient id="tube" gradientUnits="userSpaceOnUse" x1="990" y1="858" x2="926" y2="968"><stop stop-color="#46423a"/><stop offset=".1" stop-color="#4a463e"/><stop offset=".25" stop-color="#665f55"/><stop offset=".45" stop-color="#625e54"/><stop offset=".68" stop-color="#787870"/><stop offset=".85" stop-color="#4d4b44"/><stop offset="1" stop-color="#403e38"/></linearGradient>
  <linearGradient id="tube2" gradientUnits="userSpaceOnUse" x1="1240" y1="1060" x2="1190" y2="1146"><stop stop-color="#665f55"/><stop offset=".35" stop-color="#6c6a60"/><stop offset=".55" stop-color="#75756c"/><stop offset=".8" stop-color="#4a4740"/><stop offset="1" stop-color="#403e38"/></linearGradient>
  <linearGradient id="bore" x2="1" y2="1"><stop stop-color="#2c2b27"/><stop offset="1" stop-color="#5a5850"/></linearGradient>
  <linearGradient id="arc" gradientUnits="userSpaceOnUse" x1="1166" y1="938" x2="1238" y2="853"><stop stop-color="#e5e9ec" stop-opacity=".1"/><stop offset="1" stop-color="#e5e9ec" stop-opacity=".7"/></linearGradient>
  <linearGradient id="arc2" gradientUnits="userSpaceOnUse" x1="1264" y1="836" x2="1330" y2="836"><stop stop-color="#e5e9ec" stop-opacity=".8"/><stop offset="1" stop-color="#e5e9ec" stop-opacity=".1"/></linearGradient>
  <clipPath id="end"><path d="${END}"/></clipPath>
  <clipPath id="front"><path d="M754 545 1445 945 1617 1238 1085 930 911 814z"/></clipPath>
  <clipPath id="base"><path d="M1211 936 1471 1087 1350 1159 1090 1007z"/></clipPath>
</defs>
<path fill="#fff" d="M0 221H2560V1460H0z"/>
<path fill="url(#minor)" d="M0 221H2560V1460H0z"/><path fill="url(#major)" d="M0 221H2560V1460H0z"/>
<path stroke="#fba3a3" stroke-width="1.300" d="M560 1462 1188 1099M1800 746 2560 307"/>
<path stroke="#9bf59b" stroke-width="1.300" d="M0 308 885 819M1634 1251 2000 1462"/>
<path fill="#000" fill-opacity=".2" filter="url(#soft)" d="M752 1007 1441 1405 1809 1192 1120 794z"/>
<path stroke="#cf6a6a" stroke-width="1.300" d="M988 1214 1188 1099"/>

<g stroke="#181818" stroke-width="1.500" stroke-linejoin="round">
  <path fill="#6a645a" d="M1660 1128 1699 1164 1652 1196 1640 1190z"/>
  <path fill="#3d3b36" d="M1662 1186Q1680 1164 1695 1180L1711 1197 1718 1193Q1718 1150 1690 1162z"/>
  <path fill="#7b786f" d="M1651 1194Q1662 1164 1691 1162C1712 1160 1719 1176 1718 1194L1711 1198C1708 1176 1700 1168 1688 1169Q1668 1171 1656 1191z"/>
  <ellipse cx="1413" cy="1132" rx="12" ry="10" fill="#5a564d"/>
</g>

<g stroke="#0d1a22" stroke-width="1.500" stroke-linejoin="round">
  <path fill="#455b6b" d="M754 545 1445 945 1617 1234 1060 900 911 814z"/>
  <path fill="url(#dark3)" stroke="none" clip-path="url(#front)" d="M754 545H1400V1100H754z"/>
  <path fill="url(#foot)" d="M1050 900 1616 1231 1624 1250 1084 941 1040 925z"/>
  <path fill="url(#roll)" d="M795 465C774 470 759 490 751 510Q744 530 752 545L1445 945 1520 905 1488 865z"/>
  <path fill="url(#saddle)" d="M1074 303C1007 380 917 438 795 465L1488 865C1610 838 1700 780 1766 704z"/>
  <path fill="url(#glow)" stroke="none" d="M1074 303C1007 380 917 438 795 465L1488 865C1610 838 1700 780 1766 704z"/>
  <path fill="url(#ridge)" d="M1074 303Q1090 288 1103 289 1110 289 1116 293L1804 692 1766 704z"/>
</g>
<path stroke="#8b8b90" stroke-width="2" d="M1118 293 1800 689"/>
<g clip-path="url(#end)">
  <path fill="url(#inside)" d="${END}"/>
  <path fill="#1d6b93" d="M1766 704 1830 680V760L1766 722z"/>
  <path fill="url(#dark1)" d="${END}"/><path fill="url(#dark2)" d="${END}"/>
  <path stroke="#0d1a22" stroke-width="1.500" d="M1764 712 1806 737M1612 1206 1640 1222"/>
  <path fill="none" stroke="#0d1a22" stroke-width="17" d="${END}"/>
  <path fill="none" stroke="#1a668f" stroke-width="14" d="${END}"/>
</g>
<path fill="none" stroke="#0d1a22" stroke-width="1.700" stroke-linejoin="round" d="${END}"/>

<g stroke="#181818" stroke-width="1.500" stroke-linejoin="round">
  <path fill="url(#tube)" d="M912 814C880 808 850 850 843 897Q842 922 856 929L1036 1033 1072 912 1070 906z"/>
  <path fill="#716e65" d="M1070 906C1045 918 1028 962 1028 1010C1028 1042 1044 1036 1056 1024C1074 1000 1084 968 1084 942L1065 929 1072 913z"/>
  <path fill="url(#bore)" d="M1066 929C1046 934 1032 980 1033 1008C1034 1030 1046 1022 1056 1012C1070 992 1080 966 1080 940z"/>
  <path fill="url(#tube2)" d="M1124 976C1110 1000 1102 1036 1104 1058Q1106 1074 1114 1078L1281 1174 1330 1100z"/>
  <path fill="#716e65" d="M1316 1089C1286 1104 1270 1150 1281 1172C1296 1194 1334 1190 1358 1176C1382 1158 1396 1130 1396 1112L1330 1080z"/>
  <path fill="url(#bore)" d="M1316 1100C1292 1112 1278 1146 1288 1166C1300 1180 1330 1180 1350 1166C1372 1150 1386 1128 1388 1110z"/>
</g>

<path fill="#f0504c" fill-opacity=".6" d="M1090 913 1090 1007 1150 972 1120 940z"/>
<path fill="#923846" fill-opacity=".4" d="M1211 842 1471 992V1087L1350 1159 1090 1007V913z"/>
<path fill="#c4202a" fill-opacity=".62" d="M1090 913 1108 902 1180 952 1146 974 1118 970 1090 945z"/>
<g fill="none" stroke="#6e1014" stroke-width="1.300"><path d="M1092 940Q1104 966 1130 970M1100 938Q1112 958 1130 964"/></g>
<path fill="#2b5cc0" fill-opacity=".88" d="M1211 936 1471 1087 1350 1159 1090 1007z"/>
<g clip-path="url(#base)">
  <path fill="#7a4bb0" fill-opacity=".55" d="M1085 1007 1130 975 1156 992 1156 1010 1100 1050z"/>
  <path fill="#6a7690" fill-opacity=".3" d="M1120 980 1156 995 1316 1088 1286 1122 1085 1007z"/>
  <path fill="#5f3a8e" fill-opacity=".62" d="M1178 954 1366 1054 1406 1117 1350 1159 1286 1122 1316 1088 1156 995 1146 972z"/>
  <path fill="none" stroke="#2b64cc" stroke-width="2.500" d="M1150 975 1406 1126"/>
  <path fill="none" stroke="#2a2f7c" stroke-width="1.300" d="M1156 995 1316 1088Q1316 1098 1302 1108 1286 1130 1284 1122M1146 968 1420 1128M1156 990 1400 1132"/>
</g>
<g fill="none" stroke="#2b1a24" stroke-width="1.300"><path d="M1090 913 1211 842 1471 992 1350 1061zM1090 913V1007M1211 842V936M1471 992V1087M1350 1061V1159"/></g>
<path fill="none" stroke="#bdb6b4" stroke-width="4" stroke-linejoin="round" d="M1211 936 1472 1088 1350 1160 1089 1007z"/>
<path fill="none" stroke="#2f7fe0" stroke-width="1.500" d="M1211 939 1468 1088 1350 1157 1094 1007z"/>

<g fill="none" stroke-width="1.700"><path stroke="url(#arc)" d="M1166 938Q1184 884 1238 853"/><path stroke="url(#arc2)" d="M1264 836Q1300 816 1330 832"/></g>
<g transform="rotate(22 1250 842)"><ellipse cx="1250" cy="842" rx="10" ry="14" fill="#d5dade" stroke="#2b3a44" stroke-width="2"/><ellipse cx="1250" cy="842" rx="2.500" ry="3.500" fill="#222"/></g>
<g opacity=".5" stroke="#1f2468" stroke-width="1.500" fill="#1f2468"><path d="M1250 978V1062"/><path d="M1247 986 1250 974 1253 986zM1247 1052 1250 1064 1253 1052z"/><circle cx="1281" cy="1045" r="4" fill="none"/></g>
<text x="1229" y="1008" fill="#25246e" fill-opacity=".6">3.77</text>
<path fill="none" stroke="#1d3550" stroke-opacity=".6" stroke-width="5" d="M1248 927 1265 952H1255V966H1242V952H1232z"/>
<path fill="#1f86bd" stroke="#eef3f6" stroke-width="2.500" stroke-linejoin="round" d="M1248 927 1265 952H1255V966H1242V952H1232z"/>
</svg>`);

define('model-viewport', `:host{display:grid;grid-template:minmax(0,1fr)/minmax(0,1fr);position:relative;overflow:hidden}
  model-scene{grid-area:1/1}
  .at{grid-area:1/1;z-index:1}.t{place-self:start center;margin:6px 0 0 4px}.tl{place-self:start;margin:6px}
  .cube{place-self:start end;margin-top:19px}.r{place-self:start end;margin:126px 6px 0 0}
  .bl{place-self:end start;margin:0 0 8px 6px}.b{place-self:end center;margin-bottom:9px;padding-left:3px}
  .s{place-self:end;margin:0 23px 14px 0;font-weight:700;color:#222}
  distance-input{position:absolute;left:55.8%;top:808px;z-index:1}`,
  `<model-scene></model-scene>
  <div class="at t"><slot name="top"></slot></div><div class="at tl"><slot name="top-left"></slot></div>
  <div class="at cube"><slot name="top-right"></slot></div><div class="at r"><slot name="right"></slot></div>
  <div class="at bl"><slot name="bottom-left"></slot></div><div class="at b"><slot name="bottom"></slot></div>
  <div class="at s"><slot name="status"></slot></div><distance-input></distance-input>`);

define('time-line', `:host{display:flex;height:77px;background:#f1f1f1;border-top:2px solid #d8d8d8;border-bottom:7px solid #cde7eb;box-shadow:inset 0 -2px #a9b7bb}
  .play{display:flex;gap:8px;width:213px;padding:21px 0 0 15px}button{display:flex}
  .play button{height:28px}
  .set{display:flex;padding-top:10px}
  .done{background:linear-gradient(#e38fe4,#e38fe4) 3px 10px/calc(100% - 6px) 9px no-repeat}
  .item{width:36px;padding-top:6px;height:51px;background:linear-gradient(#c9c9c9,#c9c9c9) 17px 41px/3px 10px no-repeat,linear-gradient(#c9c9c9,#c9c9c9) 0 48px/100% 3px no-repeat}
  .first{background-position:17px 41px,17px 48px}.last{background-size:3px 10px,20px 3px}
  .item button{width:36px;height:35px;align-items:center;justify-content:center}
  .cur button{background:#0696d7}.off app-icon{opacity:.26}
  .mark{width:0}.mark svg{display:block;margin:3px 0 0 -9px;position:relative}
  .gear{margin:22px 20px 0 auto;height:24px}`,
  () => {
    const item = (n, cls) => `<div class="item ${cls}"><button aria-label="${n}">${ic(n, 24)}</button></div>`;
    const done = ['sketchEdit', 'extrude', 'sketchEdit', 'construct', 'split', 'extrude', 'combine', 'extrude', 'sketchActive', 'extrude'];
    const off = ['combine', 'mirror', 'offset', 'fillet', 'combine', 'sketchEdit', 'pipe', 'mirror', 'move', 'sketchEdit', 'move', 'move', 'mirror', 'bodies', 'move'];
    const tail = ['sketchEdit', 'pipe', 'mirror', 'move'];
    return `<div class="play">${['first', 'back', 'play', 'next', 'last'].map(n => `<button aria-label="${n}">${ic(n, 28)}</button>`).join('')}</div>
    <div class="set done">${done.map((n, i) => item(n, i === 0 ? 'first' : i === 8 ? 'cur' : '')).join('')}</div>
    <div class="set">${off.map(n => item(n, 'off')).join('')}<div class="mark"><svg width="18" height="48"><path fill="#5e5e5e" d="M0 0H18V6L11 13V48H8V13L0 6z"/></svg></div>${tail.map((n, i) => item(n, i === 3 ? 'off last' : 'off')).join('')}</div>
    <button class="gear" aria-label="Timeline settings">${ic('gear', 24)}</button>`;
  });
</script>
</body>
</html>
